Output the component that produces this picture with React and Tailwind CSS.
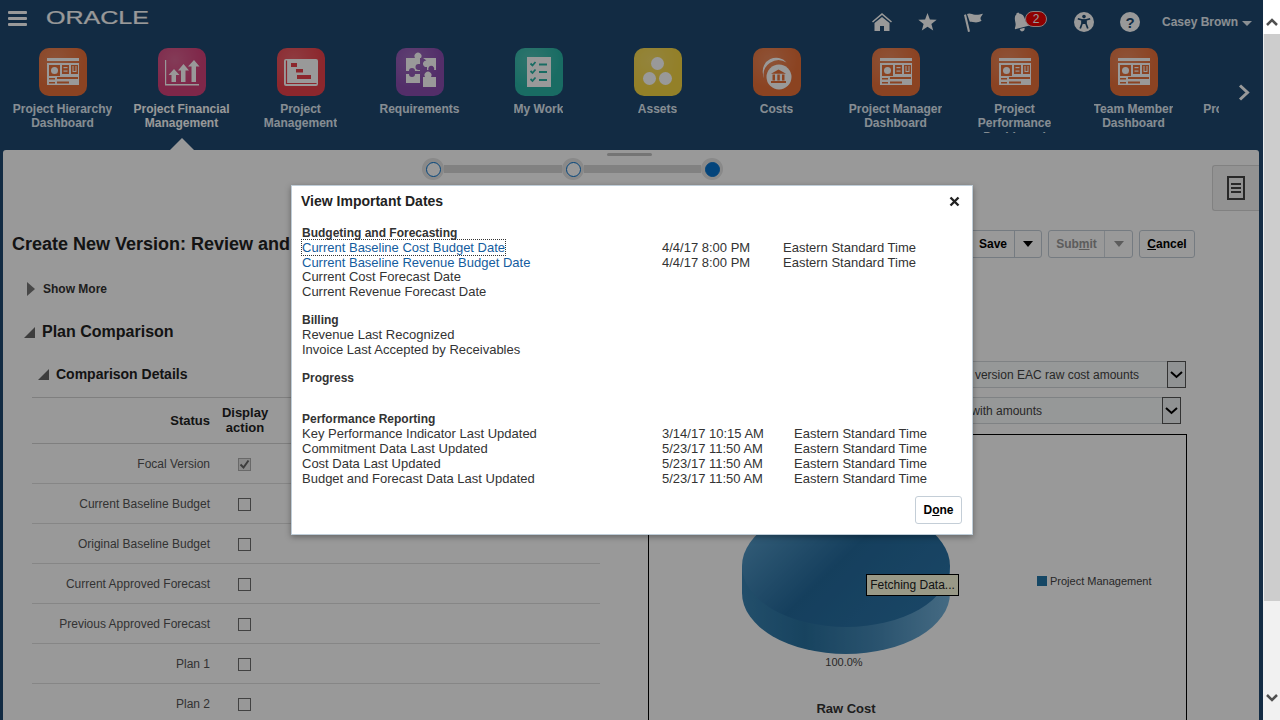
import { useState } from "react";

const TILES = [
  { label: ["Project Hierarchy", "Dashboard"], kind: "dash", bg: "bg-[#e8703a]" },
  { label: ["Project Financial", "Management"], kind: "finance", bg: "bg-[#d4417a]", active: true },
  { label: ["Project", "Management"], kind: "gantt", bg: "bg-[#ea424c]" },
  { label: ["Requirements"], kind: "puzzle", bg: "bg-[#8a4db0]" },
  { label: ["My Work"], kind: "work", bg: "bg-[#2ab5a6]" },
  { label: ["Assets"], kind: "assets", bg: "bg-[#f5d544]" },
  { label: ["Costs"], kind: "costs", bg: "bg-[#e87038]" },
  { label: ["Project Manager", "Dashboard"], kind: "dash", bg: "bg-[#e8703a]" },
  { label: ["Project", "Performance", "Dashboard"], kind: "dash", bg: "bg-[#e8703a]" },
  { label: ["Team Member", "Dashboard"], kind: "dash", bg: "bg-[#e8703a]" },
  { label: ["Project Resource"], kind: "dash", bg: "bg-[#e8703a]" },
];

const STATUS_ROWS = [
  { name: "Focal Version", checked: true },
  { name: "Current Baseline Budget" },
  { name: "Original Baseline Budget" },
  { name: "Current Approved Forecast" },
  { name: "Previous Approved Forecast" },
  { name: "Plan 1" },
  { name: "Plan 2" },
];

function TileGlyph({ kind }) {
  if (kind === "dash") {
    return (
      <svg width="48" height="48" viewBox="0 0 48 48">
        <rect x="8" y="10" width="32" height="3" fill="#fff" />
        <rect x="8" y="15" width="32" height="22" fill="#fff" />
        <g fill="#e8703a">
          <rect x="10" y="17" width="11" height="11" />
          <rect x="23" y="17" width="7" height="9" />
          <rect x="32" y="17" width="7" height="9" />
          <rect x="10" y="30" width="6" height="1.5" />
          <rect x="10" y="34" width="6" height="1.5" />
          <rect x="18" y="29" width="21" height="2" />
          <rect x="18" y="33.5" width="12" height="2" />
        </g>
        <circle cx="15.5" cy="22.5" r="3.5" fill="#fff" />
        <g fill="#fff">
          <rect x="24.5" y="19" width="4" height="1.2" />
          <rect x="24.5" y="22.5" width="4" height="1.2" />
          <path d="M33.5 18h1v5h2v-5h1v6h-4z" />
        </g>
      </svg>
    );
  }
  if (kind === "finance") {
    return (
      <svg width="48" height="48" viewBox="0 0 48 48" fill="#fff">
        <path d="M7 12h1.2v24H41v1.4H7z" />
        <path d="M16 21l5.5 6H18v7h-4.500v-7H10.500z" />
        <path d="M25.500 16l5.500 6.500h-3.500V34H23V22.500h-3z" />
        <path d="M36 12l5.500 6.500H38V34h-4.500V18.500H30z" />
      </svg>
    );
  }
  if (kind === "gantt") {
    return (
      <svg width="48" height="48" viewBox="0 0 48 48">
        <rect x="7" y="11" width="34" height="27" rx="2" fill="#fff" />
        <path d="M9.500 12.500v23h30" fill="none" stroke="#ea424c" strokeWidth="1.200" />
        <rect x="14" y="15" width="6" height="4" fill="#ea424c" />
        <rect x="19" y="21" width="7" height="3.500" fill="#ea424c" />
        <rect x="20" y="27" width="14" height="4" fill="#ea424c" />
      </svg>
    );
  }
  if (kind === "puzzle") {
    return (
      <svg width="48" height="48" viewBox="0 0 48 48" fill="#fff">
        <path d="M10 10h9a3.500 3.500 0 1 1 6 0h-1v6h-1.500a3 3 0 1 0 0 6H24v1h-5a3 3 0 1 0-6 0h-3z" />
        <path d="M27 10h13v12h-2a3 3 0 1 0-5.500 0H31v-3a3.300 3.300 0 1 1-.500-6.500z" />
        <path d="M10 26h3a3 3 0 1 0 6 0h5v9h-14z" />
        <path d="M27 29h2a3.500 3.500 0 1 1 6 0h5v10H27z" />
      </svg>
    );
  }
  if (kind === "work") {
    return (
      <svg width="48" height="48" viewBox="0 0 48 48">
        <rect x="12" y="9" width="24" height="30" fill="#fff" />
        <g stroke="#2ab5a6" strokeWidth="1.800" fill="none">
          <path d="M15.500 15.500l2 2 3-3.500M15.500 23l2 2 3-3.500M15.500 31l2 2 3-3.500" />
          <path d="M24 16.500h8M24 24h8M24 32h8" />
        </g>
      </svg>
    );
  }
  if (kind === "assets") {
    return (
      <svg width="48" height="48" viewBox="0 0 48 48" fill="#fff">
        <circle cx="23.500" cy="15.500" r="6.500" />
        <circle cx="15.500" cy="30.500" r="6.500" />
        <circle cx="31.500" cy="30.500" r="6.500" />
      </svg>
    );
  }
  // costs: coin stack with a bank in front
  return (
    <svg width="48" height="48" viewBox="0 0 48 48">
      <path d="M33.500 14.500A13.500 13.500 0 0 0 10 26c0 1.500.300 3 .800 4A15 15 0 0 1 33.500 14.500z" fill="#fff" />
      <circle cx="26" cy="29" r="12.500" fill="#fff" />
      <path d="M25.500 21.500l7.500 4.200H18z" fill="#e87038" />
      <rect x="19.500" y="26.500" width="2.500" height="6" fill="#e87038" />
      <rect x="24.300" y="26.500" width="2.500" height="6" fill="#e87038" />
      <rect x="29" y="26.500" width="2.500" height="6" fill="#e87038" />
      <rect x="18" y="33" width="15" height="2" fill="#e87038" />
    </svg>
  );
}

function Tile({ tile }) {
  return (
    <div className="relative flex h-full w-[119px] shrink-0 flex-col items-center">
      <div className={`relative h-12 w-12 shrink-0 overflow-hidden rounded-[10px] ${tile.bg}`}>
        <div className="absolute inset-0 bg-[radial-gradient(circle_at_35%_25%,rgba(255,255,255,0.18),rgba(255,255,255,0)_60%)]" />
        <div className="relative">
          <TileGlyph kind={tile.kind} />
        </div>
      </div>
      <div
        className={`mt-[6px] h-[31px] overflow-hidden whitespace-nowrap text-center text-xs leading-[14px] font-bold ${
          tile.active ? "text-white" : "text-[#e0ebf5]"
        }`}
      >
        {tile.label.map((line) => (
          <div key={line}>{line}</div>
        ))}
      </div>
      {tile.active && (
        <div className="absolute bottom-0 left-1/2 h-0 w-0 -translate-x-1/2 border-x-[12px] border-b-[12px] border-x-transparent border-b-white" />
      )}
    </div>
  );
}

function TopBar() {
  return (
    <div className="flex h-[44px] items-center text-[#e6eef5]">
      <svg className="mt-[-7px] ml-[8px]" width="19" height="15" viewBox="0 0 19 15" fill="#fff">
        <rect width="19" height="3" rx="1" y="0" />
        <rect width="19" height="3" rx="1" y="6" />
        <rect width="19" height="3" rx="1" y="12" />
      </svg>
      <svg className="mt-[-9px] ml-[19px]" width="105" height="18" viewBox="0 0 105 18">
        <text
          x="0"
          y="15"
          textLength="103"
          lengthAdjust="spacingAndGlyphs"
          fontSize="18"
          fontFamily="Liberation Sans, sans-serif"
          fill="#fff"
          stroke="#fff"
          strokeWidth="0.2"
        >
          ORACLE
        </text>
      </svg>
      <div className="ml-auto flex items-center pr-[11px]">
        <div className="flex w-[46px] justify-center">
          <svg width="20" height="18" viewBox="0 0 20 18" fill="#fff">
            <path d="M10 0L0 8.500l1 1L10 2l9 7.500 1-1z" />
            <path d="M10 4L2.500 10v8H8v-5h4v5h5.500v-8z" />
          </svg>
        </div>
        <div className="flex w-[46px] justify-center">
          <svg width="19" height="18" viewBox="0 0 19 18" fill="#fff">
            <path d="M9.500 0l2.400 6.400 6.800.3-5.300 4.300 1.800 6.600-5.700-3.800-5.700 3.800 1.800-6.600L.300 6.700l6.800-.3z" />
          </svg>
        </div>
        <div className="flex w-[46px] justify-center">
          <svg width="20" height="19" viewBox="0 0 20 19" fill="#fff">
            <path d="M0 2l2-.800L6 18.500l-2 .5z" />
            <path d="M3 1c3-1.500 5 .5 8 .8 3 .3 5.500-.5 8-1-1 2-2.500 3-2.500 4.500s1 2 1 2.500c-2.500 1.200-5 2-7 1.500-1.500-.3-2.500-1-4.700-.500z" />
          </svg>
        </div>
        <div className="relative flex h-[20px] w-[64px] items-center">
          <svg className="ml-[16px] -rotate-[14deg]" width="16" height="20" viewBox="0 0 16 20" fill="#fff">
            <path d="M7 0c1 0 1.500.7 1.500 1.500C11.500 2.300 12.500 5 12.500 8c0 3 1 4.500 3 6.500v1H.5v-1c1.500-2 2-3.500 2-6.500 0-3 1-5.700 3-6.500C5.500.7 6 0 7 0z" />
            <path d="M5 16.500h5c0 1.800-1 3-2.500 3S5 18.300 5 16.500z" />
          </svg>
          <div className="absolute top-[-1px] left-[28px] flex h-[16px] w-[22px] items-center justify-center rounded-full border border-[#e8d0d0] bg-[#ee0000] text-xs leading-none text-white">
            2
          </div>
        </div>
        <div className="flex w-[46px] justify-center">
          <svg width="20" height="20" viewBox="0 0 20 20">
            <circle cx="10" cy="10" r="10" fill="#fff" />
            <circle cx="10" cy="4.600" r="1.800" fill="#1e4970" />
            <path
              d="M3.800 6.800L8 8v3.500L6.200 16.500M16.200 6.800L12 8v3.500l1.800 5M8 8h4"
              stroke="#1e4970"
              strokeWidth="1.700"
              fill="none"
            />
            <rect x="8" y="7.500" width="4" height="4.500" fill="#1e4970" />
          </svg>
        </div>
        <div className="flex w-[46px] justify-center">
          <div className="flex h-[20px] w-[20px] items-center justify-center rounded-full bg-white text-[15px] leading-none font-bold text-[#1e4970]">
            ?
          </div>
        </div>
        <span className="ml-[9px] text-xs font-bold text-[#e6eef5]">Casey Brown</span>
        <span className="mt-[2px] ml-[4px] h-0 w-0 border-x-[5px] border-t-[5px] border-x-transparent border-t-[#e6eef5]" />
      </div>
    </div>
  );
}

function NavStrip() {
  return (
    <div className="relative flex h-[106px] items-start pt-[4px]">
      <div className="ml-[3px] flex h-full w-[1216px] overflow-hidden">
        {TILES.map((tile, i) => (
          <Tile key={i} tile={tile} />
        ))}
      </div>
      <svg className="absolute top-[40px] left-[1238px]" width="13" height="17" viewBox="0 0 13 17">
        <path d="M2 1.500l7.500 7-7.500 7" fill="none" stroke="#fff" strokeWidth="3" />
      </svg>
    </div>
  );
}

function Station({ current }) {
  return (
    <div className="flex h-[22px] w-[22px] items-center justify-center rounded-full bg-[#e4e4e4]">
      <div
        className={`h-[15px] w-[15px] rounded-full border-[1.5px] border-[#0572ce] ${
          current ? "bg-[#0572ce]" : "bg-white"
        }`}
      />
    </div>
  );
}

function Train() {
  return (
    <div className="mt-[8px] ml-[419px] flex w-[301px] items-center">
      <Station />
      <div className="h-[8px] w-[118px] bg-[#d8d8d8]" />
      <Station />
      <div className="h-[8px] w-[117px] bg-[#d8d8d8]" />
      <Station current />
    </div>
  );
}

function Button({ children, className = "" }) {
  return (
    <div
      className={`flex h-[28px] items-center justify-center rounded-[3px] border border-[#c4ced7] bg-[#ffffff] text-xs font-bold text-[#000] ${className}`}
    >
      {children}
    </div>
  );
}

function Caret({ color }) {
  return <span className={`h-0 w-0 border-x-[5px] border-t-[6px] border-x-transparent ${color}`} />;
}

function TitleRow() {
  return (
    <div className="mt-[19px] flex h-[28px] items-center pr-[64px]">
      <h1 className="ml-[9px] text-lg leading-[28px] font-bold text-[#222]">Create New Version: Review and Submit</h1>
      <div className="ml-auto flex gap-[6px]">
        <Button className="w-[90px]">
          <span className="ml-[26px] flex-1">Save</span>
          <span className="flex h-full w-[27px] items-center justify-center border-l border-[#c4ced7]">
            <Caret color="border-t-black" />
          </span>
        </Button>
        <Button className="w-[85px] bg-[#f4f6f8] text-[#9a9a9a]">
          <span className="flex-1 text-center">
            Sub<u>m</u>it
          </span>
          <span className="flex h-full w-[28px] items-center justify-center border-l border-[#d4dbe1]">
            <Caret color="border-t-[#9a9a9a]" />
          </span>
        </Button>
        <Button className="w-[56px]">
          <span>
            <u>C</u>ancel
          </span>
        </Button>
      </div>
    </div>
  );
}

function Checkbox({ checked }) {
  return (
    <div
      className={`mt-[1px] flex h-[13px] w-[13px] items-center justify-center border ${
        checked ? "border-[#b0b0b0] bg-[#e6e6e6]" : "border-[#6e6e6e] bg-[#fdfdfd]"
      }`}
    >
      {checked && (
        <svg width="11" height="11" viewBox="0 0 11 11">
          <path d="M1.500 5.500l3 3 5-7" stroke="#666" strokeWidth="2" fill="none" />
        </svg>
      )}
    </div>
  );
}

function CornerArrow() {
  return (
    <span className="relative mr-[7px] h-[11px] w-[11px]">
      <span className="absolute bottom-0 left-0 h-0 w-0 border-b-[11px] border-l-[11px] border-b-[#666] border-l-transparent" />
    </span>
  );
}

function PlanColumn() {
  return (
    <div className="w-[597px] shrink-0">
      <div className="mt-[2px] ml-[21px] flex h-[24px] items-center text-base font-bold text-[#222]">
        <CornerArrow />
        Plan Comparison
      </div>
      <div className="mt-[20px] ml-[35px] flex h-[20px] items-center text-sm font-bold text-[#222]">
        <CornerArrow />
        Comparison Details
      </div>
      <div className="mt-[13px] ml-[29px] w-[568px] border-t border-[#d4d4d4]">
        <div className="flex h-[46px] items-center border-b border-[#d4d4d4] text-[13px] font-bold text-[#222]">
          <div className="w-[178px] text-right">Status</div>
          <div className="mt-[-2px] ml-[7px] w-[56px] text-center leading-[15px]">
            Display
            <br />
            action
          </div>
        </div>
        {STATUS_ROWS.map((row) => (
          <div key={row.name} className="flex h-[40px] items-center border-b border-[#e0e0e0] text-xs text-[#555]">
            <div className="w-[178px] text-right">{row.name}</div>
            <div className="ml-[28px]">
              <Checkbox checked={row.checked} />
            </div>
          </div>
        ))}
      </div>
    </div>
  );
}

function ChoiceBox({ text, width, textEnd, className = "" }) {
  return (
    <div className={`flex h-[27px] items-stretch ${className}`} style={{ width }}>
      <div
        className="flex flex-1 items-center justify-end border-y border-[#d4d9dc] bg-[#fbfdfd] text-xs text-[#444]"
        style={{ paddingRight: textEnd }}
      >
        {text}
      </div>
      <div className="flex w-[19px] items-center justify-center border border-[#555] bg-[#f0f3f5]">
        <svg width="13" height="8" viewBox="0 0 13 8">
          <path d="M1 1l5.500 5L12 1" stroke="#000" strokeWidth="2" fill="none" />
        </svg>
      </div>
    </div>
  );
}

function PieChart() {
  return (
    <div className="relative mt-[10px] h-[300px] w-[539px] border-x border-t border-black">
      <svg width="537" height="300" viewBox="0 0 537 300">
        <defs>
          <linearGradient id="pieSide" x1="0" x2="1" y1="0" y2="0">
            <stop offset="0" stopColor="#3a83b2" />
            <stop offset="0.3" stopColor="#28719f" />
            <stop offset="0.65" stopColor="#468ab8" />
            <stop offset="1" stopColor="#74b2da" />
          </linearGradient>
          <linearGradient id="pieTop" x1="0" x2="1" y1="0" y2="0.6">
            <stop offset="0" stopColor="#63a8d4" />
            <stop offset="0.55" stopColor="#246a9c" />
            <stop offset="1" stopColor="#2a74a8" />
          </linearGradient>
        </defs>
        <path d="M93 131v27a104 61 0 0 0 208 0v-27z" fill="url(#pieSide)" />
        <ellipse cx="197" cy="131" rx="104" ry="61" fill="url(#pieTop)" />
        <text x="195" y="231" textAnchor="middle" fontSize="11" fontFamily="Liberation Sans" fill="#444">
          100.0%
        </text>
        <rect x="388" y="141" width="10" height="10" fill="#2477a8" />
        <text x="401" y="150" fontSize="11" fontFamily="Liberation Sans" fill="#444">
          Project Management
        </text>
        <text x="197" y="278" textAnchor="middle" fontSize="13" fontWeight="bold" fontFamily="Liberation Sans" fill="#333">
          Raw Cost
        </text>
      </svg>
      <div className="absolute top-[139px] left-[217px] flex h-[22px] w-[93px] items-center justify-center border border-black bg-[#ffffe1] text-xs text-[#222]">
        Fetching Data...
      </div>
    </div>
  );
}

function Panel() {
  return (
    <div className="relative flex-1 overflow-hidden rounded-t-[3px] bg-white">
      <div className="absolute top-[3px] left-[604px] h-[3px] w-[45px] rounded-full bg-[#c4c4c4]" />
      <div className="flex h-[61px] items-start justify-between">
        <Train />
        <div className="mt-[15px] flex h-[46px] w-[47px] items-center justify-center rounded-l-[3px] border-y border-l border-[#d8d8d8] bg-[#f4f4f4]">
          <svg width="18" height="24" viewBox="0 0 18 24" fill="none" stroke="#444" strokeWidth="2">
            <rect x="1" y="1" width="16" height="22" />
            <path d="M4 8h10M4 12h10M4 16h10" />
          </svg>
        </div>
      </div>
      <TitleRow />
      <div className="mt-[24px] ml-[24px] flex h-[14px] items-center text-xs font-bold text-[#333]">
        <span className="mr-[8px] h-0 w-0 border-y-[7px] border-l-[8px] border-y-transparent border-l-[#777]" />
        Show More
      </div>
      <div className="mt-[22px] flex">
        <PlanColumn />
        <div className="ml-[48px] flex w-[540px] flex-col">
          <ChoiceBox text="version EAC raw cost amounts" width={538} textEnd={28} className="mt-[43px]" />
          <ChoiceBox text="with amounts" width={533} textEnd={120} className="mt-[9px]" />
          <PieChart />
        </div>
      </div>
    </div>
  );
}

function Scrollbar() {
  return (
    <div className="flex h-full w-[17px] shrink-0 flex-col bg-[#f1f1f1]">
      <div className="flex h-[34px] items-end justify-center bg-white pb-[8px]">
        <svg width="12" height="8" viewBox="0 0 12 8">
          <path d="M1 7l5-5 5 5" stroke="#505050" strokeWidth="2.500" fill="none" />
        </svg>
      </div>
      <div className="ml-[1px] h-[567px] bg-[#cdcdcd]" />
      <div className="mt-auto flex h-[34px] items-start justify-center pt-[8px]">
        <svg width="12" height="8" viewBox="0 0 12 8">
          <path d="M1 1l5 5 5-5" stroke="#505050" strokeWidth="2.500" fill="none" />
        </svg>
      </div>
    </div>
  );
}

function SectionHead({ children, className = "" }) {
  return <div className={`pt-[2px] text-[12px] leading-[13px] font-bold ${className}`}>{children}</div>;
}

function DateRow({ label, date, zone, link, focused, zoneClass = "w-[121px]", className = "" }) {
  return (
    <div className={`flex ${className}`}>
      <div className="w-[360px] shrink-0">
        <span
          className={`${link ? "text-[#145c9e]" : "text-[#333]"} ${
            focused ? "outline-1 outline-dotted outline-[#333]" : ""
          }`}
        >
          {label}
        </span>
      </div>
      {date && <div className={`shrink-0 ${zoneClass}`}>{date}</div>}
      {zone && <div>{zone}</div>}
    </div>
  );
}

function DatesDialog({ onClose }) {
  return (
    <div className="absolute top-[185px] left-[291px] flex h-[350px] w-[682px] flex-col border border-[#bfcdd8] bg-white shadow-[0_2px_6px_rgba(0,0,0,0.35)]">
      <div className="flex h-[30px] items-center justify-between pr-[12px] pl-[9px]">
        <h2 className="text-sm font-bold text-[#222]">View Important Dates</h2>
        <button type="button" onClick={onClose} aria-label="Close">
          <svg className="block" width="11" height="11" viewBox="0 0 11 11">
            <path d="M1.500 1.500l8 8M9.500 1.500l-8 8" stroke="#222" strokeWidth="2.400" />
          </svg>
        </button>
      </div>
      <div className="mt-[9px] pl-[10px] text-[13px] leading-[15px] text-[#333]">
        <SectionHead>Budgeting and Forecasting</SectionHead>
        <DateRow
          link
          focused
          label="Current Baseline Cost Budget Date"
          date="4/4/17 8:00 PM"
          zone="Eastern Standard Time"
        />
        <DateRow link label="Current Baseline Revenue Budget Date" date="4/4/17 8:00 PM" zone="Eastern Standard Time" />
        <DateRow label="Current Cost Forecast Date" className="mt-[-1px]" />
        <DateRow label="Current Revenue Forecast Date" />
        <SectionHead className="mt-[13px]">Billing</SectionHead>
        <DateRow label="Revenue Last Recognized" />
        <DateRow label="Invoice Last Accepted by Receivables" />
        <SectionHead className="mt-[13px]">Progress</SectionHead>
        <SectionHead className="mt-[26px]">Performance Reporting</SectionHead>
        <DateRow
          label="Key Performance Indicator Last Updated"
          date="3/14/17 10:15 AM"
          zone="Eastern Standard Time"
          zoneClass="w-[132px]"
        />
        <DateRow
          label="Commitment Data Last Updated"
          date="5/23/17 11:50 AM"
          zone="Eastern Standard Time"
          zoneClass="w-[132px]"
        />
        <DateRow
          label="Cost Data Last Updated"
          date="5/23/17 11:50 AM"
          zone="Eastern Standard Time"
          zoneClass="w-[132px]"
        />
        <DateRow
          label="Budget and Forecast Data Last Updated"
          date="5/23/17 11:50 AM"
          zone="Eastern Standard Time"
          zoneClass="w-[132px]"
        />
      </div>
      <div className="mt-auto flex justify-end pr-[10px] pb-[10px]">
        <Button className="w-[47px]">
          <span>
            D<u>o</u>ne
          </span>
        </Button>
      </div>
    </div>
  );
}

export default function App() {
  const [open, setOpen] = useState(true);

  return (
    <div className="flex h-[720px] w-[1280px] overflow-hidden font-['Liberation_Sans',Arial,sans-serif]">
      <div className="relative flex h-full w-[1263px] shrink-0 flex-col bg-[#1e4970]">
        <TopBar />
        <NavStrip />
        <div className="flex min-h-0 flex-1 pr-[4px] pl-[3px]">
          <Panel />
        </div>
        {open && <div className="absolute inset-0 bg-black/40" />}
        {open && <DatesDialog onClose={() => setOpen(false)} />}
      </div>
      <Scrollbar />
    </div>
  );
}
